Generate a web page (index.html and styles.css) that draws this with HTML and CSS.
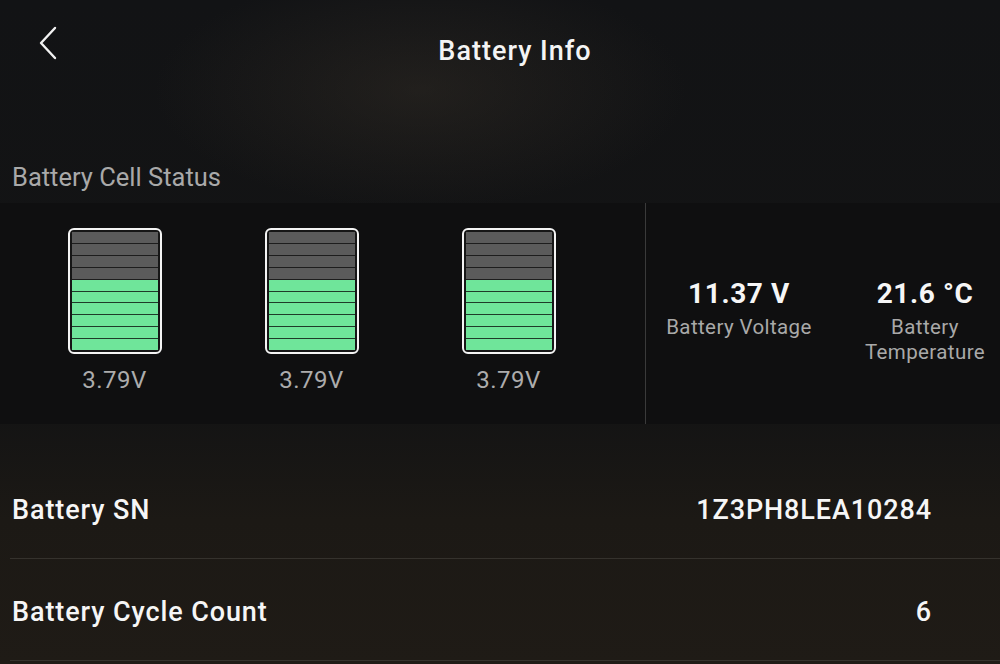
FILE: index.html
```html
<!DOCTYPE html>
<html lang="en">
<head>
  <meta charset="UTF-8"/>
  <meta name="viewport" content="width=device-width, initial-scale=1.0"/>
  <title>Battery Info</title>
  <link rel="stylesheet" href="styles.css">
</head>
<body>

  <div class="header">
    <a class="back-btn" href="#">
      <svg width="20" height="34" viewBox="0 0 20 34">
        <path d="M17 2 L3 17 L17 32" fill="none" stroke="#f2f2f2" stroke-width="2.4" stroke-linecap="round" stroke-linejoin="round"/>
      </svg>
    </a>
    <h1>Battery Info</h1>
  </div>

  <div class="section-title">Battery Cell Status</div>

  <div class="cell-panel">
    <div class="cells">
      <div class="cell-item">
        <div class="cell">
          <div class="seg"></div><div class="seg"></div><div class="seg"></div><div class="seg"></div>
          <div class="seg on"></div><div class="seg on"></div><div class="seg on"></div>
          <div class="seg on"></div><div class="seg on"></div><div class="seg on"></div>
        </div>
        <div class="cell-volt">3.79V</div>
      </div>
      <div class="cell-item">
        <div class="cell">
          <div class="seg"></div><div class="seg"></div><div class="seg"></div><div class="seg"></div>
          <div class="seg on"></div><div class="seg on"></div><div class="seg on"></div>
          <div class="seg on"></div><div class="seg on"></div><div class="seg on"></div>
        </div>
        <div class="cell-volt">3.79V</div>
      </div>
      <div class="cell-item">
        <div class="cell">
          <div class="seg"></div><div class="seg"></div><div class="seg"></div><div class="seg"></div>
          <div class="seg on"></div><div class="seg on"></div><div class="seg on"></div>
          <div class="seg on"></div><div class="seg on"></div><div class="seg on"></div>
        </div>
        <div class="cell-volt">3.79V</div>
      </div>
    </div>

    <div class="stats">
      <div class="stat">
        <div class="stat-value">11.37 V</div>
        <div class="stat-label">Battery Voltage</div>
      </div>
      <div class="stat">
        <div class="stat-value">21.6 °C</div>
        <div class="stat-label">Battery<br>Temperature</div>
      </div>
    </div>
  </div>

  <div class="info-list">
    <div class="info-row">
      <span class="info-label">Battery SN</span>
      <span class="info-value">1Z3PH8LEA10284</span>
    </div>
    <div class="info-row">
      <span class="info-label">Battery Cycle Count</span>
      <span class="info-value">6</span>
    </div>
  </div>

</body>
</html>
```

FILE: styles.css
```css
* {
  box-sizing: border-box;
  margin: 0;
  padding: 0;
}

html, body {
  height: 100%;
}

body {
  font-family: Roboto, 'Noto Sans', sans-serif;
  color: #f2f2f2;
  overflow: hidden;
  background:
    radial-gradient(ellipse 380px 170px at 420px 90px, rgba(62, 54, 44, 0.35), rgba(0, 0, 0, 0) 70%),
    linear-gradient(180deg, #121315 0px, #141414 420px, #1c1915 520px, #1f1b16 664px);
}

.header {
  position: relative;
  height: 100px;
  display: flex;
  justify-content: center;
  padding-top: 33px;
}

.header h1 {
  font-size: 27px;
  font-weight: 500;
  letter-spacing: 1px;
  color: #f4f4f4;
  margin-left: 30px;
  line-height: 36px;
}

.back-btn {
  position: absolute;
  left: 38px;
  top: 26px;
}

.section-title {
  height: 103px;
  padding: 61px 0 0 12px;
  font-size: 25.5px;
  line-height: 32px;
  color: #a9a9a9;
}

.cell-panel {
  display: flex;
  height: 221px;
  background: #0f0f10;
}

.cells {
  flex: none;
  width: 646px;
  display: grid;
  grid-template-columns: repeat(3, 197px);
  padding: 25px 0 0 16px;
  border-right: 1px solid #3a3a3a;
}

.cell-item {
  display: flex;
  flex-direction: column;
  align-items: center;
}

.cell {
  width: 94px;
  height: 126px;
  border: 2.5px solid #f4f4f4;
  border-radius: 6px;
  padding: 2px;
  background: #161616;
  display: flex;
  flex-direction: column;
}

.seg {
  flex: 1;
  background: #5b5b5b;
  border-bottom: 1px solid #1d1d1d;
}

.seg:last-child {
  border-bottom: none;
}

.seg.on {
  background: #6fe59a;
  border-bottom-color: #1f3a29;
}

.cell-volt {
  margin-top: 10px;
  font-size: 24px;
  letter-spacing: 0.5px;
  line-height: 32px;
  color: #acacac;
}

.stats {
  flex: none;
  display: grid;
  grid-template-columns: 186px 186px;
  padding-top: 74px;
}

.stat {
  text-align: center;
}

.stat-value {
  font-size: 28px;
  font-weight: 700;
  letter-spacing: 0.6px;
  color: #f6f6f6;
  line-height: 34px;
}

.stat-label {
  margin-top: 4px;
  font-size: 20.5px;
  letter-spacing: 0.4px;
  color: #a9a9a9;
  line-height: 25px;
}

.info-list {
  padding-top: 33px;
  padding-left: 10px;
}

.info-row {
  display: flex;
  justify-content: space-between;
  align-items: center;
  height: 102px;
  padding: 4px 68px 0 2px;
  border-bottom: 1px solid #35322d;
}

.info-label,
.info-value {
  font-size: 27px;
  font-weight: 500;
  letter-spacing: 0.9px;
  color: #f6f6f6;
}
```
